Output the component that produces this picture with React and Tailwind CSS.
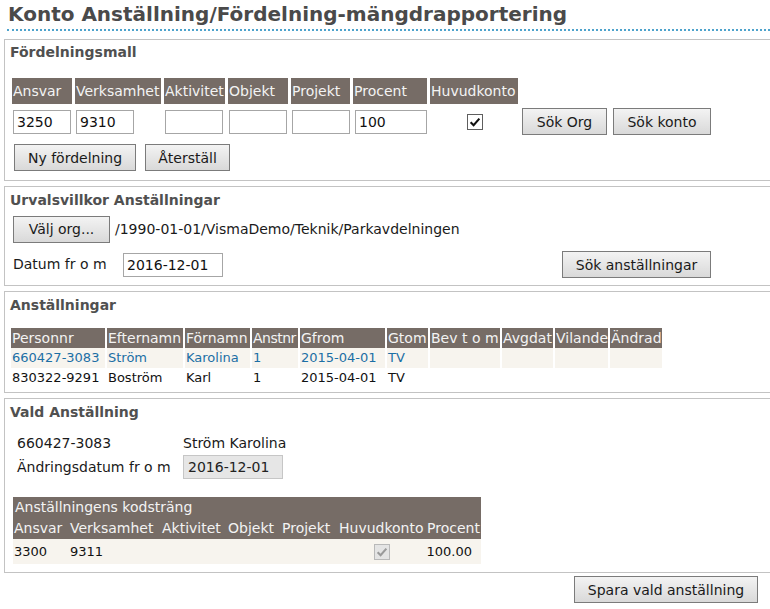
import { useState } from "react";

// kolumner för fördelningsmallen
const mallCols = [
  { label: "Ansvar", w: "w-[60px]" },
  { label: "Verksamhet", w: "w-[86px]" },
  { label: "Aktivitet", w: "w-[61px]" },
  { label: "Objekt", w: "w-[60px]" },
  { label: "Projekt", w: "w-[59px]" },
  { label: "Procent", w: "w-[74px]" },
  { label: "Huvudkonto", w: "w-[88px]" },
];

const anstCols = [
  { label: "Personnr", w: "w-[94px]" },
  { label: "Efternamn", w: "w-[76px]" },
  { label: "Förnamn", w: "w-[65px]" },
  { label: "Anstnr", w: "w-[46px] tracking-[-0.5px]" },
  { label: "Gfrom", w: "w-[85px]" },
  { label: "Gtom", w: "w-[41px]" },
  { label: "Bev t o m", w: "w-[70px]" },
  { label: "Avgdat", w: "w-[51px]" },
  { label: "Vilande", w: "w-[53px]" },
  { label: "Ändrad", w: "w-[52px]" },
];

const anstallningar = [
  ["660427-3083", "Ström", "Karolina", "1", "2015-04-01", "TV", "", "", "", ""],
  ["830322-9291", "Boström", "Karl", "1", "2015-04-01", "TV", "", "", "", ""],
];

const kodCols = [
  { label: "Ansvar", w: "w-[56px]" },
  { label: "Verksamhet", w: "w-[92px]" },
  { label: "Aktivitet", w: "w-[66px]" },
  { label: "Objekt", w: "w-[54px]" },
  { label: "Projekt", w: "w-[57px]" },
  { label: "Huvudkonto", w: "w-[88px]" },
  { label: "Procent", w: "w-[55px]" },
];

function Knapp({ children, className = "" }) {
  return (
    <button
      className={
        "h-[27px] border border-[#7b7b7b] bg-linear-to-b from-[#f3f3f3] to-[#d9d9d9] text-[14px] text-[#1a1a1a] leading-none " +
        className
      }
    >
      {children}
    </button>
  );
}

function Falt({ value, className = "" }) {
  return (
    <input
      readOnly
      value={value}
      className={
        "h-[24px] border border-[#a6a6a6] bg-white px-[3px] text-[14px] text-[#111] outline-none " +
        className
      }
    />
  );
}

function Kryss({ disabled }) {
  return (
    <span
      className={
        "flex h-[16px] w-[16px] items-center justify-center border " +
        (disabled ? "border-[#b9b9b9] bg-[#e4e4e4]" : "border-[#5e5e5e] bg-white")
      }
    >
      <svg viewBox="0 0 16 16" className="h-[14px] w-[14px]">
        <path
          d="M3 8.2 L6.4 11.6 L13 4.2"
          fill="none"
          stroke={disabled ? "#9a9a9a" : "#111"}
          strokeWidth="2.4"
        />
      </svg>
    </span>
  );
}

function Ruta({ title, children, className = "" }) {
  return (
    <div className={"ml-[4px] w-[790px] border border-[#c3c3c3] pl-[5px] " + className}>
      <div className="text-[14px] leading-[16px] font-bold text-[#505050]">{title}</div>
      {children}
    </div>
  );
}

export default function App() {
  const [huvudkonto, setHuvudkonto] = useState(true);

  return (
    <div className="w-[770px] h-[609px] overflow-hidden bg-white font-['DejaVu_Sans','Verdana',sans-serif] text-[#111]">
      <h1 className="ml-[7px] mb-[8px] border-b-2 border-dotted border-[#4ea3cc] pl-[1px] pt-[1px] pb-[2px] text-[20px] leading-[26px] font-bold text-[#4a4a4a]">
        Konto Anställning/Fördelning-mängdrapportering
      </h1>

      {/* Fördelningsmall */}
      <Ruta title="Fördelningsmall" className="pt-[4px] pb-[9px]">
        <div className="mt-[18px] ml-[2px] flex gap-[3px]">
          {mallCols.map((c) => (
            <div
              key={c.label}
              className={c.w + " h-[26px] bg-[#766c66] pl-[1px] text-[14px] leading-[26px] text-[#f3f3f3]"}
            >
              {c.label}
            </div>
          ))}
        </div>
        <div className="mt-[4px] ml-[2px] flex h-[27px] items-center gap-[3px]">
          <div className="w-[60px] pl-[1px]">
            <Falt value="3250" className="w-[58px]" />
          </div>
          <div className="w-[86px] pl-[1px]">
            <Falt value="9310" className="w-[58px]" />
          </div>
          <div className="w-[61px] pl-[1px]">
            <Falt value="" className="w-[58px]" />
          </div>
          <div className="w-[60px] pl-[1px]">
            <Falt value="" className="w-[58px]" />
          </div>
          <div className="w-[59px] pl-[1px]">
            <Falt value="" className="w-[58px]" />
          </div>
          <div className="w-[74px] pl-[2px]">
            <Falt value="100" className="w-[72px]" />
          </div>
          <div
            className="flex w-[88px] justify-center pl-[2px]"
            onClick={() => setHuvudkonto(!huvudkonto)}
          >
            {huvudkonto ? <Kryss /> : <span className="h-[16px] w-[16px] border border-[#5e5e5e] bg-white" />}
          </div>
          <Knapp className="ml-[1px] w-[85px]">Sök Org</Knapp>
          <Knapp className="ml-[3px] w-[98px]">Sök konto</Knapp>
        </div>
        <div className="mt-[9px] ml-[4px] flex gap-[9px]">
          <Knapp className="w-[122px]">Ny fördelning</Knapp>
          <Knapp className="w-[85px]">Återställ</Knapp>
        </div>
      </Ruta>

      {/* Urvalsvillkor */}
      <Ruta title="Urvalsvillkor Anställningar" className="mt-[5px] pt-[5px] pb-[7px]">
        <div className="mt-[8px] ml-[3px] flex h-[26px] items-center">
          <Knapp className="h-[26px] w-[97px]">Välj org...</Knapp>
          <span className="ml-[5px] text-[14px] text-[#1a1a1a]">
            /1990-01-01/VismaDemo/Teknik/Parkavdelningen
          </span>
        </div>
        <div className="mt-[9px] ml-[3px] flex h-[27px] items-center">
          <span className="w-[110px] text-[14px] text-[#1a1a1a]">Datum fr o m</span>
          <Falt value="2016-12-01" className="w-[100px]" />
          <Knapp className="ml-[339px] w-[149px]">Sök anställningar</Knapp>
        </div>
      </Ruta>

      {/* Anställningar */}
      <Ruta title="Anställningar" className="mt-[5px] pt-[5px] pb-[4px]">
        <div className="mt-[15px] ml-[1px]">
          <div className="flex gap-[2px]">
            {anstCols.map((c) => (
              <div
                key={c.label}
                className={c.w + " h-[20px] bg-[#766c66] pl-[1px] text-[14px] leading-[20px] whitespace-nowrap text-[#f3f3f3]"}
              >
                {c.label}
              </div>
            ))}
          </div>
          {anstallningar.map((rad, i) => (
            <div key={rad[0]} className="flex gap-[2px]">
              {rad.map((v, j) => (
                <div
                  key={j}
                  className={
                    anstCols[j].w +
                    " h-[20px] pl-[1px] text-[13px] leading-[20px] tracking-normal " +
                    (i === 0 ? "bg-[#f7f4ee] text-[#1c6fa5]" : "text-[#111]")
                  }
                >
                  {v}
                </div>
              ))}
            </div>
          ))}
        </div>
      </Ruta>

      {/* Vald anställning */}
      <Ruta title="Vald Anställning" className="mt-[5px] pt-[5px] pb-[8px]">
        <div className="mt-[15px] ml-[7px] flex h-[16px] items-center text-[14px] text-[#1a1a1a]">
          <span className="w-[166px]">660427-3083</span>
          <span>Ström Karolina</span>
        </div>
        <div className="mt-[4px] ml-[7px] flex h-[24px] items-center text-[14px] text-[#1a1a1a]">
          <span className="w-[166px]">Ändringsdatum fr o m</span>
          <input
            readOnly
            value="2016-12-01"
            className="h-[24px] w-[100px] border border-[#c6c6c6] bg-[#e6e6e6] px-[4px] text-[14px] text-[#222] outline-none"
          />
        </div>
        <div className="mt-[18px] ml-[3px] w-[468px]">
          <div className="bg-[#766c66] text-[14px] text-[#f3f3f3]">
            <div className="h-[21px] pl-[2px] leading-[21px]">Anställningens kodsträng</div>
            <div className="flex h-[21px] leading-[21px]">
              {kodCols.map((c) => (
                <div key={c.label} className={c.w + " pl-[1px] whitespace-nowrap"}>
                  {c.label}
                </div>
              ))}
            </div>
          </div>
          <div className="flex h-[25px] items-center bg-[#f7f4ee] text-[13px] text-[#111]">
            <div className="w-[56px] pl-[1px]">3300</div>
            <div className="w-[92px] pl-[1px]">9311</div>
            <div className="w-[66px]" />
            <div className="w-[54px]" />
            <div className="w-[57px]" />
            <div className="flex w-[88px] justify-center">
              <Kryss disabled />
            </div>
            <div className="w-[55px] pr-[9px] text-right">100.00</div>
          </div>
        </div>
      </Ruta>

      <div className="mt-[3px] flex">
        <Knapp className="ml-[574px] w-[184px]">Spara vald anställning</Knapp>
      </div>
    </div>
  );
}
